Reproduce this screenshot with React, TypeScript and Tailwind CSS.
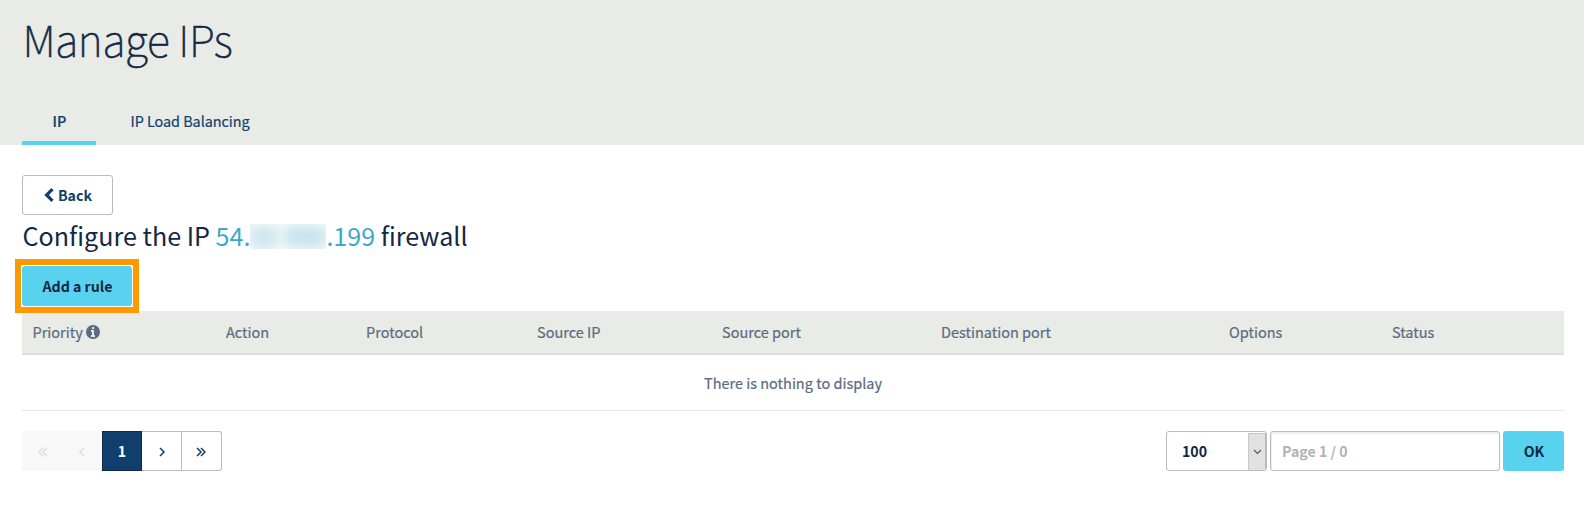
const columns = [
  { label: "Priority", width: "w-[194px]", info: true },
  { label: "Action", width: "w-[140px]" },
  { label: "Protocol", width: "w-[171px]" },
  { label: "Source IP", width: "w-[185px]" },
  { label: "Source port", width: "w-[219px]" },
  { label: "Destination port", width: "w-[288px]" },
  { label: "Options", width: "w-[163px]" },
  { label: "Status", width: "w-[182px]" },
];

function InfoIcon() {
  return (
    <svg width="14" height="14" viewBox="0 0 14 14" className="-mt-px">
      <circle cx="7" cy="7" r="7" fill="currentColor" />
      <path d="M6 2h2v2H6zM5 5h3v5h1v2H5v-2h1V7H5z" fill="#e8ebe6" />
    </svg>
  );
}

function Chevrons({ double = false, left = false }: { double?: boolean; left?: boolean }) {
  return (
    <svg
      width="10"
      height="10"
      viewBox="0 0 10 10"
      fill="none"
      stroke="currentColor"
      strokeWidth="1.5"
      className={left ? "rotate-180" : ""}
    >
      {double ? <path d="M1 1l4 4-4 4M5 1l4 4-4 4" /> : <path d="M3 1l4 4-4 4" />}
    </svg>
  );
}

function Header() {
  return (
    <header className="flex h-[145px] flex-col justify-between bg-[#e8ebe6] pl-[22px]">
      <h1 className="pt-[13px] pl-[0.5px] text-[43px] leading-[50px] font-thin tracking-[-0.4px] text-[#122844] [-webkit-text-stroke:0.6px]">Manage IPs</h1>
      <nav className="flex h-[46px] text-[14.4px] text-[#113f6d] [-webkit-text-stroke:0.2px]">
        <a className="flex w-[74px] justify-center border-b-4 border-[#59d2ef] pt-[11px] pl-px leading-[22px] font-medium">IP</a>
        <a className="ml-[34.5px] pt-[11px] leading-[22px] tracking-[-0.03px]">IP Load Balancing</a>
      </nav>
    </header>
  );
}

function RulesTable() {
  return (
    <table className="mt-[5px] w-[1542px] table-fixed border-collapse text-left text-[14.5px] text-[#5b6b82] [-webkit-text-stroke:0.2px]">
      <thead>
        <tr className="h-[43px] border-b-2 border-[#dcdddc] bg-[#e8ebe6]">
          {columns.map((c) => (
            <th key={c.label} className={`${c.width} p-0 pl-[10px] font-normal`}>
              <span className={`flex items-center gap-[3px] leading-[22px] ${c.info ? "pl-[0.5px]" : ""}`}>
                {c.label}
                {c.info && <InfoIcon />}
              </span>
            </th>
          ))}
        </tr>
      </thead>
      <tbody>
        <tr className="h-[56px] border-b border-[#e8e8e8]">
          <td colSpan={8} className="p-0 pt-px text-center leading-[22px]">
            There is nothing to display
          </td>
        </tr>
      </tbody>
    </table>
  );
}

function Pagination() {
  return (
    <div className="flex h-10">
      <button className="flex w-10 items-center justify-center rounded-l-[3px] bg-[#f8f8f8] pl-px pt-[2px] text-[#dcdfe2]">
        <Chevrons double left />
      </button>
      <button className="flex w-10 items-center justify-center bg-[#f8f8f8] pt-[2px] text-[#dcdfe2]">
        <Chevrons left />
      </button>
      <button className="flex w-10 items-center justify-center border border-[#122844] bg-[#113f6d] pt-0.5 text-[14.2px] font-bold text-white">
        1
      </button>
      <button className="flex w-10 items-center justify-center border border-l-0 border-[#bbb] pt-[2px] text-[#113f6d]">
        <Chevrons />
      </button>
      <button className="flex w-10 items-center justify-center rounded-r-[3px] border border-l-0 border-[#bbb] pt-[2px] pr-px text-[#113f6d]">
        <Chevrons double />
      </button>
    </div>
  );
}

function PageControls() {
  return (
    <div className="flex h-10 gap-[3px] text-[14.2px] font-bold">
      <div className="flex w-[101px] justify-between overflow-hidden rounded-[3px] border border-[#bbb] text-[#122844]">
        <span className="pl-[15px] leading-[38px]">100</span>
        <span className="mt-px flex w-[18px] items-center justify-center border-x border-t border-[#c8c8c8] border-r-[#bbb] bg-[#e1e1e1]">
          <svg width="9" height="6" viewBox="0 0 9 6" fill="none" stroke="#555" strokeWidth="1.1">
            <path d="M1 1l3.5 3.5L8 1" />
          </svg>
        </span>
      </div>
      <div className="w-[230px] rounded-[3px] border border-[#bbb] pl-[11px] leading-[38px] text-[#b3b3b3] shadow-[inset_1px_2px_0_#eee]">
        Page 1 / 0
      </div>
      <button className="w-[61px] rounded-[3px] bg-[#59d2ef] pt-0.5 pl-px text-[#122844]">OK</button>
    </div>
  );
}

export default function App() {
  return (
    <div className="h-[508px] w-[1584px] overflow-hidden bg-white font-['Noto_Sans_CJK_SC','Noto_Sans',sans-serif]">
      <Header />
      <main className="pt-[30px] pl-[22px]">
        <button className="flex h-10 w-[91px] items-center justify-center gap-1 rounded-[3px] border border-[#bbb] pt-0.5 pl-px text-[14.2px] font-bold text-[#113f6d]">
          <svg width="10" height="14" viewBox="0 0 10 14" fill="none" stroke="currentColor" strokeWidth="3.2" className="-mt-[3px]">
            <path d="M8.5 1.2L2.6 7l5.9 5.8" />
          </svg>
          Back
        </button>
        <h2 className="flex h-[51px] items-center pb-[12px] pl-[0.5px] text-[25.1px] leading-[40px] whitespace-pre text-[#122844]">
          Configure the IP <span className="text-[#3fa8c9]">54.</span>
          <span className="mt-1 flex h-[25px] w-[76px] items-center gap-1.5 overflow-hidden bg-[#eff7f9]">
            <span className="h-5 w-7 rounded-full bg-[#cfe6ee] blur-[5px]" />
            <span className="h-5 w-[42px] rounded-full bg-[#c9e5ec] blur-[5px]" />
          </span>
          <span className="text-[#3fa8c9]">.199</span> firewall
        </h2>
        <div className="relative -m-[7px] w-[124px] border-[6px] border-[#ff9900] bg-white p-px">
          <button className="block h-10 w-[110px] rounded-[3px] bg-[#59d2ef] pt-0.5 pl-px text-[14.2px] font-bold text-[#122844]">
            Add a rule
          </button>
        </div>
        <RulesTable />
        <div className="mt-5 flex w-[1542px] justify-between">
          <Pagination />
          <PageControls />
        </div>
      </main>
    </div>
  );
}
